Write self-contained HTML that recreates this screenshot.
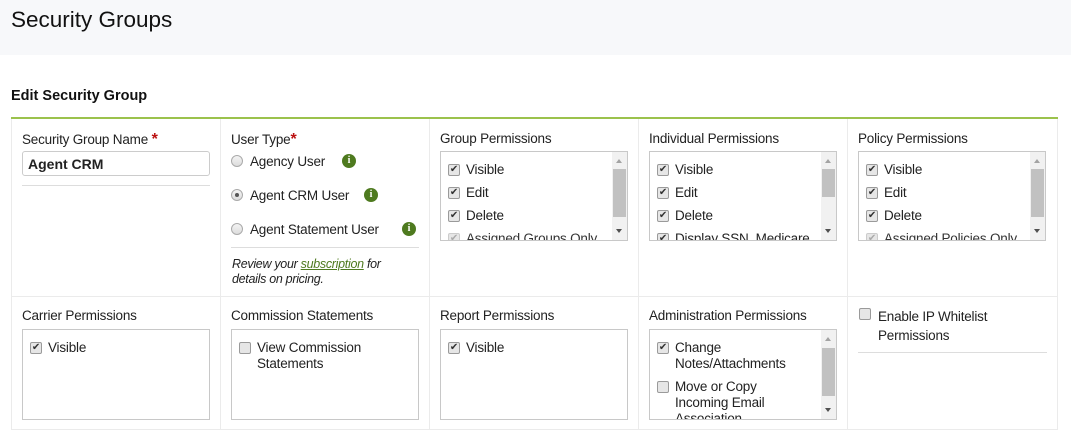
<!DOCTYPE html>
<html><head><meta charset="utf-8"><style>
*{box-sizing:border-box;margin:0;padding:0}
body{width:1071px;height:445px;background:#fff;font-family:"Liberation Sans",sans-serif;color:#222;position:relative;overflow:hidden;font-size:13.5px}
.a{position:absolute}
.hdr{left:0;top:0;width:1071px;height:55px;background:#f7f8fa}
.cell{position:absolute;border-right:1px solid #ebebeb;border-bottom:1px solid #ebebeb}
.lbl{position:absolute;font-size:13.5px;color:#222;white-space:nowrap;letter-spacing:-0.2px}
.box{position:absolute;border:1px solid #c8c8c8;background:#fff;overflow:hidden}
.it{position:absolute;left:7px;white-space:nowrap;font-size:13.5px;line-height:16px;letter-spacing:-0.2px}
.cb{position:absolute;left:0;top:2px;width:12px;height:12px;border:1px solid #9a9a9a;border-radius:2px;background:#e6e6e6;font-size:10px;line-height:10px;text-align:center;color:#333}
.it span.t{position:absolute;left:18px;top:0}
.sb{position:absolute;right:0;top:0;width:15px;height:100%;background:#f1f1f1}
.th{position:absolute;left:1px;width:13px;background:#c1c1c1}
.up,.dn{position:absolute;left:4px;width:0;height:0;border-left:3.5px solid transparent;border-right:3.5px solid transparent}
.up{top:7px;border-bottom:4px solid #a3a3a3}
.dn{bottom:7px;border-top:4px solid #505050}
.rad{position:absolute;width:12px;height:12px;border-radius:50%;border:1px solid #aaa;background:linear-gradient(#f4f4f4,#dcdcdc)}
.info{position:absolute;width:14px;height:14px;border-radius:50%;background:#4e7a1f;color:#fff;font-size:10px;font-weight:bold;text-align:center;line-height:14px;font-family:"Liberation Serif",serif}
.req{color:#b11;font-weight:bold}
</style></head><body>
<div class="a hdr"></div>
<div class="a" style="left:11px;top:7px;font-size:22.5px;color:#111">Security Groups</div>
<div class="a" style="left:11px;top:88px;font-size:14.5px;font-weight:bold;color:#111">Edit Security Group</div>
<div class="a" style="left:11px;top:117px;width:1047px;height:2px;background:#9bc24c"></div>

<div class="a" style="left:11px;top:119px;width:1px;height:311px;background:#ebebeb"></div>
<div class="cell" style="left:12px;top:119px;width:209px;height:178px"></div>
<div class="cell" style="left:221px;top:119px;width:209px;height:178px"></div>
<div class="cell" style="left:430px;top:119px;width:209px;height:178px"></div>
<div class="cell" style="left:639px;top:119px;width:209px;height:178px"></div>
<div class="cell" style="left:848px;top:119px;width:210px;height:178px"></div>
<div class="cell" style="left:12px;top:297px;width:209px;height:133px"></div>
<div class="cell" style="left:221px;top:297px;width:209px;height:133px"></div>
<div class="cell" style="left:430px;top:297px;width:209px;height:133px"></div>
<div class="cell" style="left:639px;top:297px;width:209px;height:133px"></div>
<div class="cell" style="left:848px;top:297px;width:210px;height:133px"></div>

<div class="lbl" style="left:22px;top:131px">Security Group Name <span class="req" style="font-size:16px">*</span></div>
<div class="a" style="left:22px;top:151px;width:188px;height:25px;border:1px solid #ccc;border-radius:3px;font-weight:bold;font-size:14px;padding:4px 5px">Agent CRM</div>
<div class="a" style="left:22px;top:185px;width:188px;height:1px;background:#ddd"></div>

<div class="lbl" style="left:231px;top:131px">User Type<span class="req" style="font-size:16px">*</span></div>
<div class="rad" style="left:231px;top:155px"></div><div class="lbl" style="left:250px;top:154px">Agency User</div><div class="info" style="left:342px;top:154px">i</div>
<div class="rad" style="left:231px;top:189px"><div style="position:absolute;left:3px;top:3px;width:4px;height:4px;border-radius:50%;background:#555"></div></div><div class="lbl" style="left:250px;top:188px">Agent CRM User</div><div class="info" style="left:364px;top:188px">i</div>
<div class="rad" style="left:231px;top:223px"></div><div class="lbl" style="left:250px;top:222px">Agent Statement User</div><div class="info" style="left:402px;top:222px">i</div>
<div class="a" style="left:231px;top:247px;width:188px;height:1px;background:#ddd"></div>
<div class="a" style="left:232px;top:257px;font-style:italic;font-size:12.5px;line-height:15px;letter-spacing:-0.3px;width:172px">Review your <span style="color:#4e7a1f;text-decoration:underline">subscription</span> for details on pricing.</div>

<div class="lbl" style="left:440px;top:131px">Group Permissions</div>
<div class="box" style="left:440px;top:151px;width:188px;height:90px">
<div class="it" style="top:10px"><span class="cb">✔</span><span class="t">Visible</span></div>
<div class="it" style="top:33px"><span class="cb">✔</span><span class="t">Edit</span></div>
<div class="it" style="top:56px"><span class="cb">✔</span><span class="t">Delete</span></div>
<div class="it" style="top:79px;color:#333"><span class="cb" style="color:#aaa;border-color:#ccc">✔</span><span class="t">Assigned Groups Only</span></div>
<div class="sb"><div class="up"></div><div class="th" style="top:17px;height:48px"></div><div class="dn"></div></div>
</div>

<div class="lbl" style="left:649px;top:131px">Individual Permissions</div>
<div class="box" style="left:649px;top:151px;width:188px;height:90px">
<div class="it" style="top:10px"><span class="cb">✔</span><span class="t">Visible</span></div>
<div class="it" style="top:33px"><span class="cb">✔</span><span class="t">Edit</span></div>
<div class="it" style="top:56px"><span class="cb">✔</span><span class="t">Delete</span></div>
<div class="it" style="top:79px"><span class="cb">✔</span><span class="t">Display SSN, Medicare</span></div>
<div class="sb"><div class="up"></div><div class="th" style="top:17px;height:28px"></div><div class="dn"></div></div>
</div>

<div class="lbl" style="left:858px;top:131px">Policy Permissions</div>
<div class="box" style="left:858px;top:151px;width:188px;height:90px">
<div class="it" style="top:10px"><span class="cb">✔</span><span class="t">Visible</span></div>
<div class="it" style="top:33px"><span class="cb">✔</span><span class="t">Edit</span></div>
<div class="it" style="top:56px"><span class="cb">✔</span><span class="t">Delete</span></div>
<div class="it" style="top:79px;color:#333"><span class="cb" style="color:#aaa;border-color:#ccc">✔</span><span class="t">Assigned Policies Only</span></div>
<div class="sb"><div class="up"></div><div class="th" style="top:17px;height:48px"></div><div class="dn"></div></div>
</div>

<div class="lbl" style="left:22px;top:308px">Carrier Permissions</div>
<div class="box" style="left:22px;top:329px;width:188px;height:91px">
<div class="it" style="top:10px"><span class="cb">✔</span><span class="t">Visible</span></div>
</div>
<div class="lbl" style="left:231px;top:308px">Commission Statements</div>
<div class="box" style="left:231px;top:329px;width:188px;height:91px">
<div class="it" style="top:10px"><span class="cb"></span><span class="t">View Commission<br>Statements</span></div>
</div>
<div class="lbl" style="left:440px;top:308px">Report Permissions</div>
<div class="box" style="left:440px;top:329px;width:188px;height:91px">
<div class="it" style="top:10px"><span class="cb">✔</span><span class="t">Visible</span></div>
</div>
<div class="lbl" style="left:649px;top:308px">Administration Permissions</div>
<div class="box" style="left:649px;top:329px;width:188px;height:91px">
<div class="it" style="top:10px"><span class="cb">✔</span><span class="t">Change<br>Notes/Attachments</span></div>
<div class="it" style="top:49px"><span class="cb"></span><span class="t">Move or Copy<br>Incoming Email<br>Association</span></div>
<div class="sb"><div class="up"></div><div class="th" style="top:18px;height:48px"></div><div class="dn"></div></div>
</div>
<div class="a" style="left:859px;top:308px;width:12px;height:12px;border:1px solid #9a9a9a;border-radius:2px;background:#e6e6e6"></div>
<div class="lbl" style="left:878px;top:307px;line-height:19px">Enable IP Whitelist<br>Permissions</div>
<div class="a" style="left:858px;top:352px;width:189px;height:1px;background:#ddd"></div>
</body></html>
